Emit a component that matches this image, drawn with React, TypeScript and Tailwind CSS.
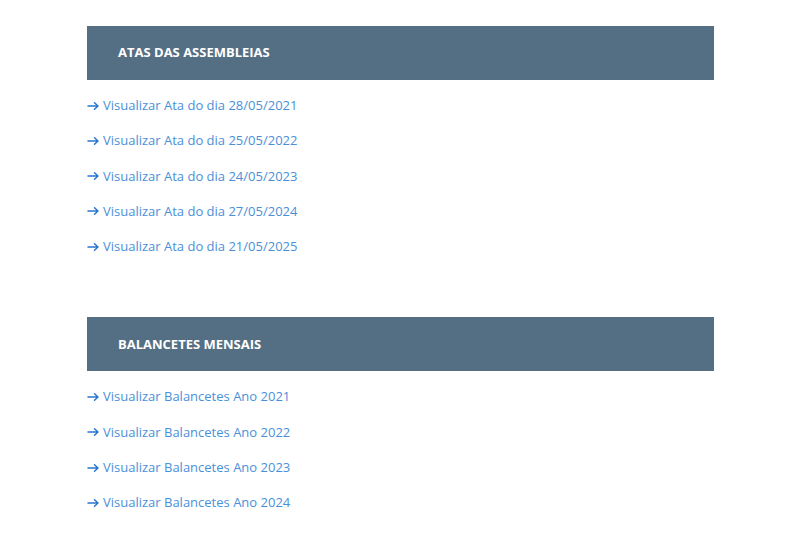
import React from "react";

const atas = ["28/05/2021", "25/05/2022", "24/05/2023", "27/05/2024", "21/05/2025"];
const balancetes = ["2021", "2022", "2023", "2024"];

const Arrow = () => (
  <svg width="16" height="10" viewBox="0 0 16 10" className="shrink-0 mt-[1px]">
    <path
      d="M1 5h9.5M7.5 1.8 11 5l-3.5 3.2"
      fill="none"
      stroke="#2a76cc"
      strokeWidth="1.5"
      strokeLinecap="round"
      strokeLinejoin="round"
    />
  </svg>
);

const Section = ({ title, items }: { title: string; items: string[] }) => (
  <section>
    <div className="h-[54px] bg-[#546e84] flex items-center pl-[31px]">
      <h2 className="text-[13px] font-bold text-white uppercase">{title}</h2>
    </div>
    <ul className="mt-[15px]">
      {items.map((item, i) => (
        <li key={i} className="leading-[20px] mb-[15.3px] text-[13px]">
          <a href="#" className="text-[#4a90d9] flex items-center">
            <Arrow />
            {item}
          </a>
        </li>
      ))}
    </ul>
  </section>
);

export default function App() {
  return (
    <div
      className="bg-white min-h-[533px] pt-[26px]"
      style={{ fontFamily: '"Open Sans", sans-serif' }}
    >
      <div className="ml-[87px] w-[627px] flex flex-col gap-[46px]">
        <Section
          title="Atas das Assembleias"
          items={atas.map((d) => `Visualizar Ata do dia ${d}`)}
        />
        <Section
          title="Balancetes Mensais"
          items={balancetes.map((y) => `Visualizar Balancetes Ano ${y}`)}
        />
      </div>
    </div>
  );
}
